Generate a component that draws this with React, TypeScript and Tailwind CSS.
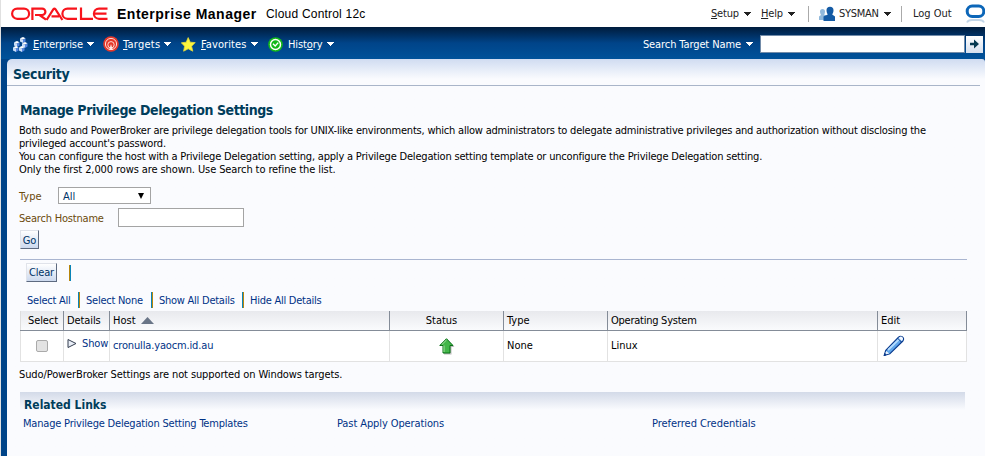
import React from "react";

const font = "font-['DejaVu_Sans_Condensed','DejaVu_Sans',sans-serif]";

function Caret({ className = "" }: { className?: string }) {
  return (
    <svg width="8" height="4" viewBox="0 0 8 4" className={`shrink-0 ${className}`} fill="currentColor" shapeRendering="crispEdges">
      <path d="M0 0h7L3.5 4z" />
    </svg>
  );
}

function OracleLogo() {
  return (
    <svg width="99" height="14" viewBox="0 0 99 14" fill="none" stroke="#f8141c" strokeWidth="2.2">
      <rect x="1.1" y="1.6" width="17" height="10.2" rx="5.1" />
      <path d="M21.4 13V1.6H31.2a3.2 3.2 0 0 1 0 6.4H24M28.500 8L35 12.600" />
      <path d="M35.600 13L42.400 2.2Q43.400 1 44.400 2.2L51.400 13M40.500 9.400H48" />
      <path d="M66 1.6H56.500a5.1 5.1 0 0 0 0 10.200H66" />
      <path d="M70 .5V11.800H82" />
      <path d="M96.500 1.6H88a5.1 5.1 0 0 0 0 10.200H96.500M84 6.700H95.500" />
    </svg>
  );
}

const cubes = [[7, 0], [1, 4], [9, 5], [0, 9], [6, 9]];

function CubesIcon() {
  return (
    <svg width="15" height="15" viewBox="0 0 15 15">
      {cubes.map(([x, y]) => (
        <g key={`${x}-${y}`} transform={`translate(${x} ${y})`}>
          <path d="M0 1.3L3 0l2.5 1.3L3 2.8z" fill="#fff" />
          <path d="M0 1.3l3 1.5V6L0 4.5z" fill="#c9def9" />
          <path d="M5.5 1.3L3 2.8V6l2.5-1.5z" fill="#5386df" />
        </g>
      ))}
    </svg>
  );
}

function TargetIcon() {
  return (
    <svg width="16" height="16" viewBox="0 0 16 16" fill="none">
      <circle cx="8" cy="8" r="7.8" fill="#e5382a" />
      <circle cx="8" cy="8" r="5.600" stroke="#ffd9d3" strokeWidth="1" />
      <circle cx="8" cy="8.8" r="3.2" stroke="#ffd9d3" strokeWidth="1" />
      <path d="M8 8l-1.8 6h3.600z" fill="#ffe9e5" />
    </svg>
  );
}

function StarIcon() {
  return (
    <svg width="15" height="15" viewBox="0 0 15 15">
      <path d="M7.2.6l2 4.600 5 .4-3.600 3.600 1.2 5-4.600-2.400-4.600 2.400 1-5L.3 5.800l4.900-.6z" fill="#fdf63c" stroke="#e6d83a" strokeWidth=".8" strokeLinejoin="round" />
    </svg>
  );
}

function HistoryIcon() {
  return (
    <svg width="15" height="15" viewBox="0 0 15 15" fill="none">
      <circle cx="7.5" cy="7.5" r="7.3" fill="#12b81a" />
      <circle cx="7.5" cy="7.5" r="5" stroke="#fff" strokeWidth="1.4" />
      <path d="M5 6.800l2.2 2.2 3-3.400" stroke="#fff" strokeWidth="1.4" />
    </svg>
  );
}

function UserIcon() {
  return (
    <svg width="17" height="16" viewBox="0 0 17 16">
      <path d="M1 5.500a2.500 2.500 0 0 1 5 0c0 1.500-.6 2.500-.6 3.500H7v5H0v-3.500l2-1.500C1.600 8 1 7 1 5.500z" fill="#91b9dc" />
      <path d="M7.500 4.200a3.500 3.500 0 0 1 7 0c0 2-.8 3.300-1.300 4.300l2.800 2V15H4.500v-4.500L8.800 8.500C8.200 7.500 7.500 6 7.500 4.200z" fill="#145ba5" />
    </svg>
  );
}

function PencilIcon() {
  return (
    <svg className="mb-px ml-[2px]" width="22" height="22" viewBox="0 0 22 22" strokeLinejoin="round">
      <path d="M1.200 20.500l1.500-5L15.500 2.200q2-1.800 4-.2t.4 4L7 18.700z" fill="#5fa5ea" stroke="#0b3a8c" strokeWidth="1.100" />
      <path d="M5 15L16.500 3.800" stroke="#b5dcff" strokeWidth="1.800" />
      <path d="M1.800 19.800l1.400-3.800 3 2.500z" fill="#e8f3ff" />
      <path d="M16.800 1.900q1.500-.8 2.600.4t.3 2.700l-1 .9-3-2.900z" fill="#f3f8ff" />
      <path d="M14.600 3.200l3.900 3.900M1.200 20.500l.8-2 1.200 1.200z" stroke="#0b3a8c" fill="#0b3a8c" />
    </svg>
  );
}

function MenuItem({ icon, first, rest, pre = "", width, tracking }: { icon: React.ReactNode; first: string; rest: string; pre?: string; width: string; tracking: string }) {
  return (
    <div className={`flex items-center ${width}`}>
      <span className="flex w-5">{icon}</span>
      <span className={tracking}>{pre}<u>{first}</u>{rest}</span>
      <Caret className="ml-1" />
    </div>
  );
}

function Divider({ flip = false }: { flip?: boolean }) {
  return <span className={`h-4 w-[2px] shrink-0 border-l ${flip ? "border-[#b8860b] bg-[#0a84b8]" : "border-[#0a84b8] bg-[#b8860b]"}`} />;
}

const headCell = "flex items-center border-l border-[#848c98] pl-[3px]";
const bodyCell = "flex items-center border-l border-[#e2e2e2] pl-[3px]";
const cols = "grid grid-cols-[43px_46px_280px_114px_104px_270px_89px]";
const button = "flex items-center justify-center border border-[#e0e3ea] border-r-[#5d6a80] border-b-[#5d6a80] bg-linear-to-b from-white to-[#ccd9ee] text-[#003366]";

export default function App() {
  return (
    <div className={`flex h-[456px] w-[985px] flex-col overflow-hidden border-l border-[#e0e0e0] bg-white text-[11px] leading-[13px] text-black ${font}`}>
      <header className="flex h-[27px] items-center">
        <div className="ml-[10px] flex"><OracleLogo /></div>
        <b className="ml-[7px] w-[149px] whitespace-nowrap pt-px font-['Liberation_Sans',sans-serif] text-[14px] tracking-[0.5px]">Enterprise Manager</b>
        <span className="whitespace-nowrap pt-[2px] font-['Liberation_Sans',sans-serif] text-[12px] tracking-[0.2px]">Cloud Control 12c</span>
        <div className="ml-auto flex h-full items-center text-[#222]">
          <span className="w-[33px] tracking-[-0.2px]"><u>S</u>etup</span><Caret className="mr-[9px]" />
          <span className="w-[27px] tracking-[-0.2px]"><u>H</u>elp</span><Caret className="mr-3" />
          <span className="h-4 w-px bg-[#aaa]" />
          <span className="ml-[10px] w-5"><UserIcon /></span>
          <span className="w-[45px] tracking-[-0.3px]">SYSMAN</span><Caret className="mr-[9px]" />
          <span className="h-4 w-px bg-[#aaa]" />
          <span className="ml-[11px] w-[52px] whitespace-nowrap">Log Out</span>
          <svg width="20" height="26" viewBox="0 0 20 26" fill="none">
            <rect x="2.200" y="5" width="16.600" height="10.500" rx="5" stroke="#0c66b8" strokeWidth="3" />
            <path d="M2 21.500q1-2.500 5-2.500h7q4 0 5 2.500" stroke="#c3d6e8" strokeWidth="1.800" />
          </svg>
        </div>
      </header>
      <nav className="flex h-8 items-center bg-linear-to-b from-[#001c3d] via-[#004489] to-[#00529a] pl-3 pt-[2px] text-white">
        <MenuItem icon={<CubesIcon />} first="E" rest="nterprise" width="w-[90px]" tracking="tracking-[-0.1px]" />
        <MenuItem icon={<TargetIcon />} first="T" rest="argets" width="w-[78px]" tracking="tracking-[0.25px]" />
        <MenuItem icon={<StarIcon />} first="F" rest="avorites" width="w-[87px]" tracking="tracking-[0.1px]" />
        <MenuItem icon={<HistoryIcon />} pre="Hist" first="o" rest="ry" width="w-[80px]" tracking="tracking-[-0.1px]" />
        <div className="ml-auto flex items-center">
          <span className="whitespace-nowrap tracking-[-0.1px]">Search Target Name</span>
          <Caret className="ml-[5px] mr-[6px]" />
          <span className="h-[18px] w-[205px] border border-[#738ca9] bg-white" />
          <span className="ml-px mr-[2px] flex h-[17px] w-[17px] items-center justify-center bg-linear-to-b from-white to-[#d5dfee]">
            <svg width="11" height="10" viewBox="0 0 11 10"><path d="M1 3.800h4V.6L10 5 5 9.400V6.200H1z" fill="#063951" /></svg>
          </span>
        </div>
      </nav>
      <div className="flex h-[397px] bg-[#004488] pl-[6px]">
        <main className="flex w-[978px] flex-col rounded-tl-[5px] rounded-tr-[3px] bg-[#fafbfe] bg-linear-to-b from-[#d0dcf1] to-[#fafbfe] to-[20px]">
          <div className="mr-[5px] flex h-[27px] items-center border-b border-[#a9b5c9] pl-[6px] pt-1 text-[14px] font-bold tracking-[-0.3px] text-[#003d5b]">Security</div>
          <h1 className="ml-[13px] mt-4 h-[17px] whitespace-nowrap text-[14px] font-bold leading-[17px] tracking-[-0.44px] text-[#003d5b]">Manage Privilege Delegation Settings</h1>
          <div className="ml-3 mt-[5px] whitespace-nowrap">
            <p className="tracking-[-0.213px]">Both sudo and PowerBroker are privilege delegation tools for UNIX-like environments, which allow administrators to delegate administrative privileges and authorization without disclosing the</p>
            <p className="tracking-[-0.2px]">privileged account's password.</p>
            <p className="tracking-[-0.19px]">You can configure the host with a Privilege Delegation setting, apply a Privilege Delegation setting template or unconfigure the Privilege Delegation setting.</p>
            <p className="tracking-[-0.1px]">Only the first 2,000 rows are shown. Use Search to refine the list.</p>
          </div>
          <div className="ml-3 mt-[11px] flex h-[17px] items-center text-[#6b4a0c]">
            <span className="w-[39px] pt-[2px]">Type</span>
            <div className="flex h-[17px] w-[93px] items-center justify-between border border-[#a4a4a4] bg-white pl-1 pr-[6px] text-[#003366]"><span className="pt-px">All</span>
              <svg width="6" height="6" viewBox="0 0 6 6"><path d="M0 0h6L3 6z" /></svg>
            </div>
          </div>
          <div className="ml-3 mt-1 flex h-[19px] items-center text-[#6b4a0c]">
            <span className="w-[99px] pt-px tracking-[-0.2px]">Search Hostname</span><span className="h-[19px] w-[126px] border border-[#a4a4a4] bg-white" />
          </div>
          <div className={`ml-[13px] mt-[3px] h-[19px] w-[19px] pt-px ${button}`}>Go</div>
          <div className="ml-[13px] mt-[10px] h-px w-[947px] bg-[#a9b5d0]" />
          <div className="mt-[3px] flex h-[19px] items-center">
            <div className={`ml-[19px] h-[19px] w-[31px] tracking-[-0.2px] ${button}`}>Clear</div>
            <span className="ml-3 flex pt-px"><Divider flip /></span>
          </div>
          <div className="ml-5 mt-[9px] flex h-[18px] items-center whitespace-nowrap tracking-[-0.25px] text-[#003286]">
            <span className="w-[51px] pt-px">Select All</span><Divider />
            <span className="ml-[6px] w-[65px] pt-px">Select None</span><Divider />
            <span className="ml-[6px] w-[83px] pt-px">Show All Details</span><Divider />
            <span className="ml-[6px] pt-px">Hide All Details</span>
          </div>
          <div className="ml-[13px] mt-[2px] w-[947px]">
            <div className={`h-5 border-b border-r border-[#848c98] bg-linear-to-b from-[#e8e9ed] to-[#fafbfd] ${cols}`}>
              <div className="flex items-center border-l border-[#ddd] pl-[7px] tracking-[-0.1px]">Select</div>
              <div className={`${headCell} tracking-[-0.1px]`}>Details</div>
              <div className={headCell}>Host<svg className="ml-[5px]" width="13" height="7" viewBox="0 0 13 7"><path d="M0 7L6.500 0 13 7z" fill="#697587" /></svg></div>
              <div className="flex items-center justify-center border-l border-[#848c98] pr-[10px]">Status</div>
              <div className={headCell}>Type</div>
              <div className={`${headCell} tracking-[-0.25px]`}>Operating System</div>
              <div className={headCell}>Edit</div>
            </div>
            <div className={`h-[31px] border-b border-r border-[#e2e2e2] bg-white ${cols}`}>
              <div className={bodyCell}><span className="mb-px ml-3 h-3 w-3 rounded-[2px] border border-[#aaa] bg-[#e3e3e3]" /></div>
              <div className={`${bodyCell} pb-[6px]`}>
                <svg className="shrink-0" width="10" height="9" viewBox="0 0 10 9"><path d="M1 .5v8l8-4z" fill="#e9eef7" stroke="#333d4e" /></svg>
                <span className="ml-[5px] tracking-[-0.1px] text-[#003286]">Show</span>
              </div>
              <div className={`${bodyCell} pb-px tracking-[-0.15px] text-[#003286]`}>cronulla.yaocm.id.au</div>
              <div className="flex items-center justify-center border-l border-[#e2e2e2]">
                <svg width="16" height="17" viewBox="0 0 16 17">
                  <path d="M8.500 2L15.500 9h-3v7.500H5V9" fill="#bbb" />
                  <path d="M7.500.7L14 7.500h-3V15H4V7.500H.8z" fill="#43b649" stroke="#087016" />
                  <path d="M2.800 6.700L7.500 2M5 7.500v6.500" stroke="#a5e0a0" />
                </svg>
              </div>
              <div className={`${bodyCell} pb-px`}>None</div>
              <div className={`${bodyCell} pb-px`}>Linux</div>
              <div className={bodyCell}><PencilIcon /></div>
            </div>
          </div>
          <p className="ml-3 mt-[6px] tracking-[-0.11px]">Sudo/PowerBroker Settings are not supported on Windows targets.</p>
          <div className="ml-[13px] mt-[11px] flex h-6 w-[945px] items-center bg-linear-to-b from-[#d3dae8] to-[#fafbfe] to-75% pl-1 pt-[2px] text-[12px] font-bold text-[#003d5b]">Related Links</div>
          <div className="ml-4 mt-px flex text-[#003286]">
            <span className="w-[314px] tracking-[-0.2px]">Manage Privilege Delegation Setting Templates</span>
            <span className="w-[315px] tracking-[-0.1px]">Past Apply Operations</span>
            <span className="tracking-[-0.05px]">Preferred Credentials</span>
          </div>
        </main>
      </div>
    </div>
  );
}
